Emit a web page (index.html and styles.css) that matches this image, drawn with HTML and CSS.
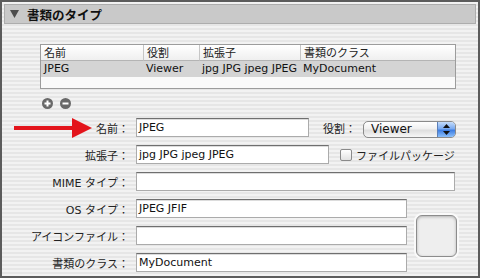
FILE: index.html
```html
<!DOCTYPE html>
<html lang="ja">
<head>
<meta charset="utf-8">
<link rel="stylesheet" href="styles.css">
</head>
<body>
<div class="frame">
  <div class="header">
    <svg class="disclosure" width="9" height="8" viewBox="0 0 9 8"><polygon points="0,0 9,0 4.5,8" fill="#4d4d4d"/></svg>
    <span class="title">書類のタイプ</span>
  </div>

  <div class="table">
    <div class="cell head">名前</div>
    <div class="cell head sep">役割</div>
    <div class="cell head sep">拡張子</div>
    <div class="cell head sep">書類のクラス</div>
    <div class="cell sel">JPEG</div>
    <div class="cell sel">Viewer</div>
    <div class="cell sel">jpg JPG jpeg JPEG</div>
    <div class="cell sel">MyDocument</div>
    <div class="cell empty"></div>
    <div class="cell empty"></div>
    <div class="cell empty"></div>
    <div class="cell empty"></div>
  </div>

  <div class="buttons">
    <svg width="11" height="11" viewBox="0 0 11 11"><circle cx="5.5" cy="5.5" r="5.5" fill="#686868"/><path d="M2.5 5.5h6M5.5 2.5v6" stroke="#fff" stroke-width="2"/></svg>
    <svg width="11" height="11" viewBox="0 0 11 11"><circle cx="5.5" cy="5.5" r="5.5" fill="#686868"/><path d="M2.5 5.5h6" stroke="#fff" stroke-width="2"/></svg>
  </div>

  <div class="form">
    <div class="row">
      <label class="lbl">名前：</label>
      <div class="field w1">JPEG</div>
      <label class="lbl2">役割：</label>
      <div class="popup">
        <span class="popup-text">Viewer</span>
        <span class="popup-arrows">
          <svg width="7" height="11" viewBox="0 0 7 11"><polygon points="3.5,0 7,4 0,4" fill="#111"/><polygon points="0,7 7,7 3.5,11" fill="#111"/></svg>
        </span>
      </div>
    </div>
    <div class="row">
      <label class="lbl">拡張子：</label>
      <div class="field w2">jpg JPG jpeg JPEG</div>
      <span class="checkbox"></span>
      <span class="cblabel">ファイルパッケージ</span>
    </div>
    <div class="row">
      <label class="lbl">MIME タイプ：</label>
      <div class="field w3"></div>
    </div>
    <div class="group">
      <div class="rows">
        <div class="row">
          <label class="lbl">OS タイプ：</label>
          <div class="field w4">JPEG JFIF</div>
        </div>
        <div class="row">
          <label class="lbl">アイコンファイル：</label>
          <div class="field w4"></div>
        </div>
        <div class="row">
          <label class="lbl">書類のクラス：</label>
          <div class="field w4">MyDocument</div>
        </div>
      </div>
      <div class="well"></div>
    </div>
  </div>

  <svg class="arrow" width="78" height="20" viewBox="0 0 78 20">
    <rect x="0" y="8" width="60" height="4" fill="#e3141b"/>
    <polygon points="58,0 78,10 58,20" fill="#e3141b"/>
  </svg>
</div>
</body>
</html>
```

FILE: styles.css
```css
* { box-sizing: border-box; }
html, body { margin: 0; padding: 0; }
body {
  width: 480px;
  height: 278px;
  overflow: hidden;
  font-family: "DejaVu Sans", "Noto Sans CJK JP", sans-serif;
  font-size: 11px;
  color: #111;
}
.frame {
  position: relative;
  width: 480px;
  height: 278px;
  border: 2px solid #5c5c5c;
  background: repeating-linear-gradient(to bottom, #f2f2f2 0px, #f2f2f2 2px, #e6e6e6 2px, #e6e6e6 4px);
}
.header {
  margin: 2px 2px 0 2px;
  height: 20px;
  border: 1px solid #adadad;
  background: #c9c9c9;
  display: flex;
  align-items: center;
  padding-left: 5px;
}
.disclosure { display: block; }
.title {
  margin-left: 8px;
  font-family: "Noto Sans CJK JP", sans-serif;
  font-weight: bold;
  font-size: 12.5px;
  color: #111;
}
.table {
  margin: 20px 0 0 38px;
  width: 416px;
  border: 1px solid #9c9c9c;
  display: grid;
  grid-template-columns: 102px 56px 101px 1fr;
  grid-template-rows: 16px 16px 11px;
  background: #fff;
}
.cell {
  padding-left: 3px;
  white-space: nowrap;
  overflow: hidden;
  line-height: 15px;
}
.head {
  font-family: "Noto Sans CJK JP", sans-serif;
  background: linear-gradient(to bottom, #ffffff, #efefef);
  border-bottom: 1px solid #b4b4b4;
  color: #222;
}
.sep { border-left: 1px solid #c6c6c6; }
.sel {
  background: #d4d4d4;
  line-height: 16px;
}
.empty { background: #fafafa; }
.buttons {
  margin: 9px 0 0 40px;
  display: flex;
  gap: 7px;
  height: 11px;
}
.buttons svg { display: block; }
.form {
  margin-top: 9px;
  display: flex;
  flex-direction: column;
  gap: 8px;
}
.row {
  display: flex;
  align-items: center;
  height: 19px;
}
.lbl {
  width: 127px;
  margin-right: 7px;
  text-align: right;
  white-space: nowrap;
  color: #222;
}
.field {
  height: 19px;
  background: #fff;
  border: 1px solid #ababab;
  border-top-color: #6f6f6f;
  box-shadow: inset 0 1px 0 #dcdcdc;
  padding-left: 2px;
  line-height: 17px;
  font-size: 11px;
  white-space: nowrap;
}
.w1 { width: 173px; }
.w2 { width: 193px; }
.w3 { width: 319px; }
.w4 { width: 271px; }
.lbl2 {
  margin-left: 14px;
  width: 34px;
  white-space: nowrap;
  color: #222;
}
.popup {
  margin-left: 6px;
  margin-top: 4px;
  width: 93px;
  height: 17px;
  border: 1px solid #8a8a8a;
  border-radius: 5px;
  background: linear-gradient(to bottom, #ffffff 0%, #f0f0f0 45%, #dedede 55%, #f6f6f6 100%);
  display: flex;
  align-items: center;
  overflow: hidden;
}
.popup-text {
  flex: 1;
  padding-left: 7px;
  font-size: 12px;
  line-height: 15px;
}
.popup-arrows {
  width: 18px;
  height: 15px;
  border-left: 1px solid #5b7fb8;
  background: linear-gradient(to bottom, #c4dcfb 0%, #7aaaf0 45%, #3d7de2 55%, #8cc0fb 100%);
  display: flex;
  align-items: center;
  justify-content: center;
}
.popup-arrows svg { display: block; }
.checkbox {
  margin-left: 11px;
  width: 12px;
  height: 12px;
  border: 1px solid #8a8a8a;
  border-radius: 2px;
  background: linear-gradient(to bottom, #ffffff, #e2e2e2);
}
.cblabel {
  margin-left: 4px;
  font-family: "Noto Sans CJK JP", sans-serif;
  white-space: nowrap;
  color: #222;
}
.group {
  display: flex;
  align-items: center;
}
.rows {
  display: flex;
  flex-direction: column;
  gap: 8px;
}
.well {
  margin-left: 9px;
  width: 41px;
  height: 42px;
  border-radius: 6px;
  border: 1px solid #8c8c8c;
  background: #eeeeee;
  box-shadow: 0 0 0 2px #fafafa, inset 0 1px 3px rgba(0,0,0,0.25);
}
.arrow {
  position: absolute;
  left: 12px;
  top: 116px;
  display: block;
}
```
